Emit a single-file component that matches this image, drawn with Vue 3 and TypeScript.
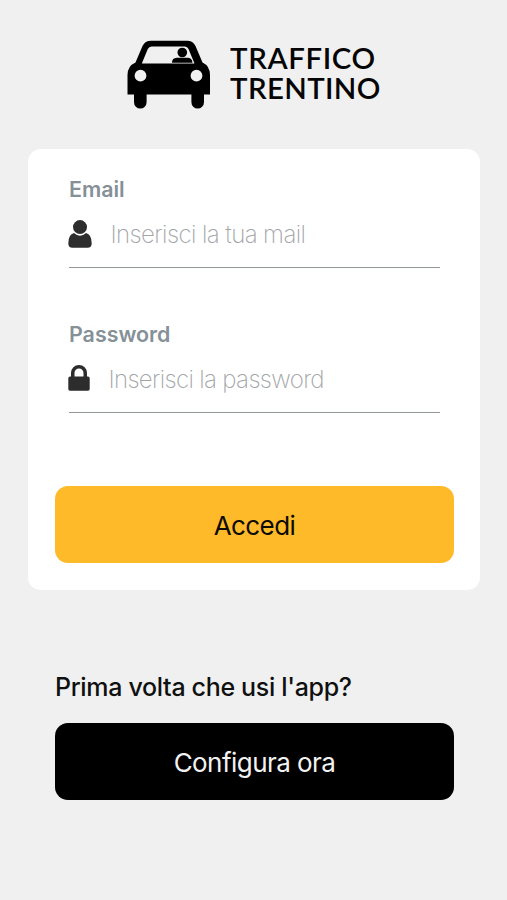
<script setup lang="ts">
import { ref } from 'vue'

const email = ref<string>('')
const password = ref<string>('')
</script>

<template>
  <main class="screen">
    <header class="brand">
      <svg class="car" viewBox="0 0 84 70" aria-hidden="true">
        <path
          fill-rule="evenodd"
          d="M24 .8H60Q66 .8 68.500 6L75.500 22.500Q83 26 83 35V54.500H77V62.300A6.300 6.300 0 0 1 64.400 62.300V54.500H19.600V62.300A6.300 6.300 0 0 1 7 62.300V54.500H.5V35Q.5 26 8.500 22.500L15.500 6Q18 .8 24 .8ZM24.500 6.500Q22 6.500 20.800 9L14.800 23.500H67.500L61.500 9Q60.300 6.500 58 6.500ZM13.500 29.800A5.900 5.900 0 1 0 13.500 41.600A5.900 5.900 0 1 0 13.500 29.800ZM69.500 29.800A5.900 5.900 0 1 0 69.500 41.600A5.900 5.900 0 1 0 69.500 29.800Z"
        />
        <circle cx="55.300" cy="12.500" r="4.800" />
        <path d="M45 22.700Q45 18 49.800 17.800H60.500Q65 17.800 65.500 22.700Z" />
      </svg>
      <h1 class="name">
        <span class="name-top">TRAFFICO</span>
        <span class="name-bottom">TRENTINO</span>
      </h1>
    </header>

    <form class="card" @submit.prevent>
      <div class="field">
        <label class="label" for="email">Email</label>
        <div class="entry">
          <svg class="user" viewBox="0 0 24 28" aria-hidden="true">
            <path d="M6 13Q12 18.500 18 13Q23.700 14.300 23.700 23.500Q23.700 27.700 19.500 27.700H4.500Q.3 27.700 .3 23.500Q.3 14.300 6 13Z" />
            <circle cx="12" cy="7.100" r="7" />
          </svg>
          <input id="email" v-model="email" class="input" type="email" placeholder="Inserisci la tua mail" />
        </div>
      </div>
      <div class="field">
        <label class="label" for="password">Password</label>
        <div class="entry">
          <svg class="lock" viewBox="0 0 22 26" aria-hidden="true">
            <path
              fill-rule="evenodd"
              d="M3 11.500V8A8 8 0 0 1 19 8V11.500H20Q21.700 11.500 21.700 13.200V24Q21.700 25.700 20 25.700H2Q.3 25.700 .3 24V13.200Q.3 11.500 2 11.500ZM6.500 11.500H15.500V8A4.500 4.500 0 0 0 6.500 8Z"
            />
          </svg>
          <input id="password" v-model="password" class="input pass" type="password" placeholder="Inserisci la password" />
        </div>
      </div>
      <button class="button login" type="submit"><span>Accedi</span></button>
    </form>

    <section class="setup">
      <p class="question">Prima volta che usi l'app?</p>
      <button class="button configure" type="button"><span>Configura ora</span></button>
    </section>
  </main>
</template>

<style>
body {
  background: #f0f0f0;
}
</style>

<style scoped>
.screen {
  box-sizing: border-box;
  width: 507px;
  height: 900px;
  padding: 40px 27px 0 28px;
  background: #f0f0f0;
  font-family: Inter, "Liberation Sans", sans-serif;
}

.brand {
  display: flex;
  height: 109px;
  padding-left: 98.500px;
}

.car {
  width: 84px;
  height: 70px;
  flex: none;
}

.name {
  display: flex;
  flex-direction: column;
  align-items: flex-start;
  margin: 4px 0 0 19px;
  font-family: Lato, Inter, sans-serif;
  font-size: 28px;
  font-weight: 600;
  line-height: 29.500px;
  white-space: nowrap;
  color: #050505;
}

.name span {
  transform: scaleX(1.05);
  transform-origin: left;
}

.name-top {
  letter-spacing: 0.600px;
}

.name-bottom {
  letter-spacing: 0.350px;
}

.card {
  box-sizing: border-box;
  height: 441px;
  padding: 26px 27px 0;
  border-radius: 13px;
  background: #fff;
}

.field {
  width: 371px;
  height: 145px;
  margin-left: 14px;
}

.label {
  display: block;
  height: 28px;
  font-size: 21.400px;
  font-weight: 600;
  line-height: 28px;
  color: #859097;
}

.entry {
  display: flex;
  box-sizing: border-box;
  height: 65px;
  padding-top: 17px;
  border-bottom: 1.500px solid #92979a;
}

.user {
  width: 24px;
  height: 28px;
  margin: 0 18.500px 0 -1px;
  flex: none;
  fill: #2d2d2d;
}

.lock {
  width: 22px;
  height: 26px;
  margin: 0 18.500px 0 -1px;
  flex: none;
  fill: #2d2d2d;
}

.input {
  min-width: 0;
  height: 30px;
  padding: 0;
  flex: 1;
  border: 0;
  outline: 0;
  background: transparent;
  font: 200 24px/30px Inter, "Liberation Sans", sans-serif;
  letter-spacing: -0.580px;
}

.pass {
  letter-spacing: -0.650px;
}

.input::placeholder {
  color: #a2a5a8;
  opacity: 1;
}

.button {
  display: flex;
  width: 399px;
  height: 77px;
  padding: 2px 0 0;
  align-items: center;
  justify-content: center;
  border: 0;
  border-radius: 13px;
  font: 400 26px/32px Inter, "Liberation Sans", sans-serif;
  letter-spacing: -0.550px;
}

.login {
  margin-top: 21px;
  background: #ffba29;
  color: #0c0b05;
}

.setup {
  padding: 79px 27px 0;
}

.question {
  height: 36px;
  margin: 0 0 17.500px;
  font-size: 25px;
  font-weight: 500;
  line-height: 36px;
  letter-spacing: -0.330px;
  white-space: nowrap;
  color: #101010;
}

.configure {
  padding-top: 3px;
  background: #000;
  color: #f2f2f2;
}
</style>
